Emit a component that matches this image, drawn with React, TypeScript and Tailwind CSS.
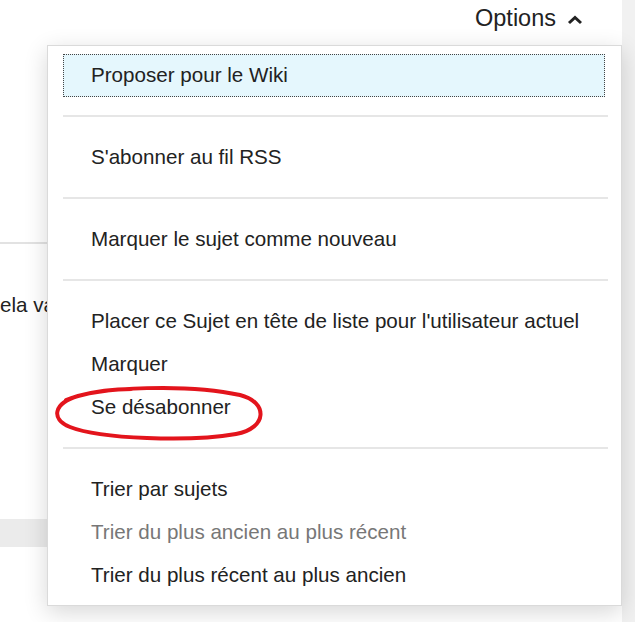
import React from "react";

interface MenuItem {
  label: string;
  muted?: boolean;
  active?: boolean;
}

const groups: MenuItem[][] = [
  [{ label: "Proposer pour le Wiki", active: true }],
  [{ label: "S'abonner au fil RSS" }],
  [{ label: "Marquer le sujet comme nouveau" }],
  [
    { label: "Placer ce Sujet en tête de liste pour l'utilisateur actuel" },
    { label: "Marquer" },
    { label: "Se désabonner" },
  ],
  [
    { label: "Trier par sujets" },
    { label: "Trier du plus ancien au plus récent", muted: true },
    { label: "Trier du plus récent au plus ancien" },
  ],
];

export default function App() {
  return (
    <div
      className="relative flex h-[622px] w-[635px] overflow-hidden bg-white text-[#222]"
      style={{ fontFamily: '"Liberation Sans", Arial, sans-serif' }}
    >
      {/* Page behind the menu */}
      <div className="flex w-[622px] flex-col">
        <div className="flex h-[37px] items-center justify-end gap-[11px] pr-[39px]">
          <span className="text-[23.5px] leading-none">Options</span>
          <svg width="16" height="10" viewBox="0 0 16 10" className="mt-[2px]">
            <polyline
              points="2,8 8,2.5 14,8"
              fill="none"
              stroke="#222"
              strokeWidth="3"
              strokeLinejoin="miter"
            />
          </svg>
        </div>
        <div className="mt-[205px] h-[2px] bg-[#e2e2e2]" />
        <div className="mt-[49px] w-[47px] overflow-hidden text-[20.6px] leading-[24px] whitespace-nowrap">
          ela va
        </div>
        <div className="mt-[202px] h-[28px] bg-[#ebebeb]" />
      </div>
      <div className="w-[13px] bg-[#f1f1f1]" />

      {/* Options dropdown */}
      <div className="absolute left-[47px] top-[45px] w-[575px] border border-[#dadada] bg-white pb-[8px] pl-[15px] pr-[13px] pt-[8px] shadow-[0_6px_22px_rgba(0,0,0,0.16)]">
        {groups.map((group, gi) => (
          <div key={gi}>
            {gi > 0 && <div className="mb-[19px] mt-[18px] h-[2px] bg-[#e6e6e6]" />}
            {group.map((item) => (
              <div
                key={item.label}
                className={`flex h-[43px] items-center whitespace-nowrap text-[20.6px] ${
                  item.active
                    ? "mr-[3px] border border-dotted border-[#444] bg-[#e5f7fd] pl-[27px]"
                    : "pl-[28px]"
                } ${item.muted ? "text-[#777]" : "text-[#222]"}`}
              >
                {item.label}
              </div>
            ))}
          </div>
        ))}
      </div>

      {/* Hand-drawn red circle */}
      <svg
        className="pointer-events-none absolute left-[50px] top-[380px]"
        width="225"
        height="65"
        viewBox="50 380 225 65"
      >
        <path
          d="M 66 400 C 100 386, 190 384, 240 395 C 268 402, 268 428, 236 434 C 190 442, 100 439, 70 427 C 50 419, 54 403, 78 396 C 100 390, 118 389, 132 389"
          fill="none"
          stroke="#e3141c"
          strokeWidth="4"
          strokeLinecap="round"
        />
      </svg>
    </div>
  );
}
